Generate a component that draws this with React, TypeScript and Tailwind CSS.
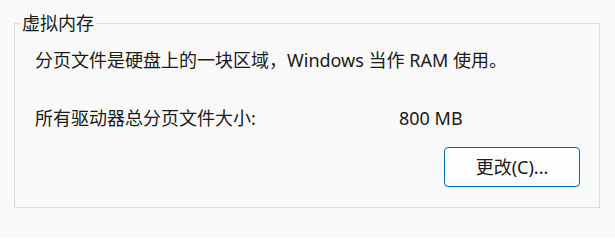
import React from 'react';

const App: React.FC = () => {
  return (
    <div
      className="w-[615px] h-[238px] overflow-hidden bg-[#f9f9f9] text-[18px] leading-[24px] text-[#1a1a1a]"
      style={{ fontFamily: '"Segoe UI", "Noto Sans", "Noto Sans CJK SC", sans-serif' }}
    >
      <fieldset className="ml-[14px] mt-[11px] w-[586px] h-[197px] border border-[#dcdcdc] p-0 m-0">
        <legend className="ml-[5px] px-[2px] leading-[24px]">虚拟内存</legend>
        <div className="pl-[20px] pt-[13px]">
          <p className="whitespace-nowrap">分页文件是硬盘上的一块区域，Windows 当作 RAM 使用。</p>
          <div className="mt-[34px] flex whitespace-nowrap">
            <span className="w-[364px]">所有驱动器总分页文件大小:</span>
            <span>800 MB</span>
          </div>
          <div className="mt-[17px] ml-[409px]">
            <button
              type="button"
              className="w-[136px] h-[40px] rounded-[4px] border border-[#0067c0] bg-[#fdfdfd] text-[18px] leading-[24px] text-[#1a1a1a]"
            >
              更改(C)...
            </button>
          </div>
        </div>
      </fieldset>
    </div>
  );
};

export default App;
